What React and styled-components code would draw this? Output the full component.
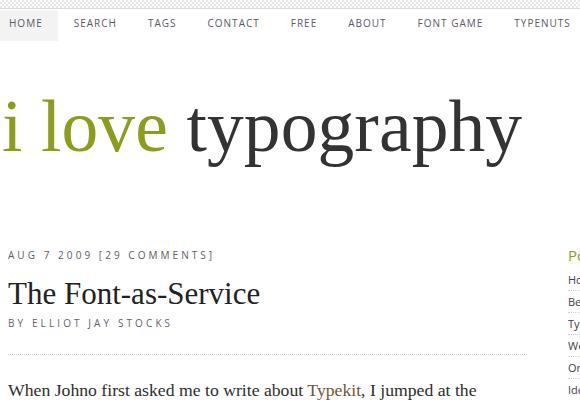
import React from "react";
import styled, { createGlobalStyle } from "styled-components";

const Global = createGlobalStyle`
  html, body { margin: 0; padding: 0; background: #fff; overflow: hidden; }
  body { font-family: "Open Sans", "DejaVu Sans", sans-serif; }
`;

const Page = styled.div`
  width: 580px;
  height: 400px;
  overflow: hidden;
`;

const Strip = styled.div`
  height: 8px;
  background-color: #fff;
  background-image: repeating-conic-gradient(#e6e6e6 0 25%, #fff 0 50%);
  background-size: 4px 4px;
  border-bottom: 1px solid #dadada;
`;

const Nav = styled.nav`
  display: flex;
  margin-top: 1px;
  height: 31px;
  white-space: nowrap;
`;

const NavItem = styled.a`
  display: block;
  padding: 6px 15px 0 16px;
  height: 31px;
  box-sizing: border-box;
  font-size: 10px;
  line-height: 14px;
  letter-spacing: 1px;
  text-transform: uppercase;
  color: #5c5868;
  text-decoration: none;
  background: ${(p) => (p.$active ? "#f3f3f3" : "transparent")};
  &:first-child { padding-left: 9px; }
`;

const Logo = styled.h1`
  margin: 49px 0 0;
  padding-left: 2px;
  font-family: "Liberation Serif", "Times New Roman", serif;
  font-weight: normal;
  font-size: 73.5px;
  line-height: 73.5px;
  letter-spacing: 0.1px;
  color: #333;
  white-space: nowrap;
`;

const Green = styled.span`
  color: #8e9c1e;
`;

const Content = styled.div`
  display: grid;
  grid-template-columns: 519px 1fr;
  column-gap: 41px;
  padding-left: 8px;
  margin-top: 84px;
`;

const Main = styled.main``;

const Meta = styled.div`
  font-size: 10px;
  line-height: 14px;
  letter-spacing: 3.05px;
  text-transform: uppercase;
  color: #5e5a66;
  white-space: nowrap;
`;

const Title = styled.h2`
  margin: 13px 0 0;
  font-family: "Liberation Serif", "Times New Roman", serif;
  font-weight: normal;
  font-size: 31px;
  line-height: 37px;
  color: #222;
  white-space: nowrap;
`;

const Byline = styled(Meta)`
  margin-top: 4px;
  letter-spacing: 3.1px;
  color: #66606e;
`;

const Rule = styled.hr`
  margin: 24px 0 0;
  border: 0;
  border-top: 1px dotted #cfcfcf;
  height: 0;
`;

const Body = styled.p`
  margin: 21px 0 0;
  font-family: "Liberation Serif", "Times New Roman", serif;
  font-size: 17.7px;
  line-height: 28px;
  color: #2e2e2e;
  white-space: nowrap;
`;

const Link = styled.a`
  color: #6e5638;
  text-decoration: none;
  border-bottom: 1px dotted #777;
`;

const Sidebar = styled.aside`
  white-space: nowrap;
  overflow: hidden;
`;

const SideHeading = styled.h3`
  margin: 0 0 7px;
  font-weight: normal;
  font-size: 15px;
  line-height: 14px;
  color: #8e9c1e;
`;

const SideList = styled.ul`
  list-style: none;
  margin: 0;
  padding: 0;
`;

const SideItem = styled.li`
  padding: 5px 0;
  font-size: 11px;
  line-height: 11px;
  color: #423c4c;
  border-bottom: 1px dotted #d0d0d0;
`;

const navItems = ["Home", "Search", "Tags", "Contact", "Free", "About", "Font Game", "Typenuts"];
const sideItems = ["Home", "Best of ILT", "Typography Books", "Web Typography", "On Typefaces", "Ideas"];

export default function App() {
  return (
    <Page>
      <Global />
      <Strip />
      <Nav>
        {navItems.map((n, i) => (
          <NavItem key={n} $active={i === 0}>{n}</NavItem>
        ))}
      </Nav>
      <Logo>
        <Green>i love</Green> typography
      </Logo>
      <Content>
        <Main>
          <Meta>Aug 7 2009 [29 Comments]</Meta>
          <Title>The Font-as-Service</Title>
          <Byline>By Elliot Jay Stocks</Byline>
          <Rule />
          <Body>
            When Johno first asked me to write about <Link>Typekit</Link>, I jumped at the
          </Body>
        </Main>
        <Sidebar>
          <SideHeading>Popular</SideHeading>
          <SideList>
            {sideItems.map((s) => (
              <SideItem key={s}>{s}</SideItem>
            ))}
          </SideList>
        </Sidebar>
      </Content>
    </Page>
  );
}
